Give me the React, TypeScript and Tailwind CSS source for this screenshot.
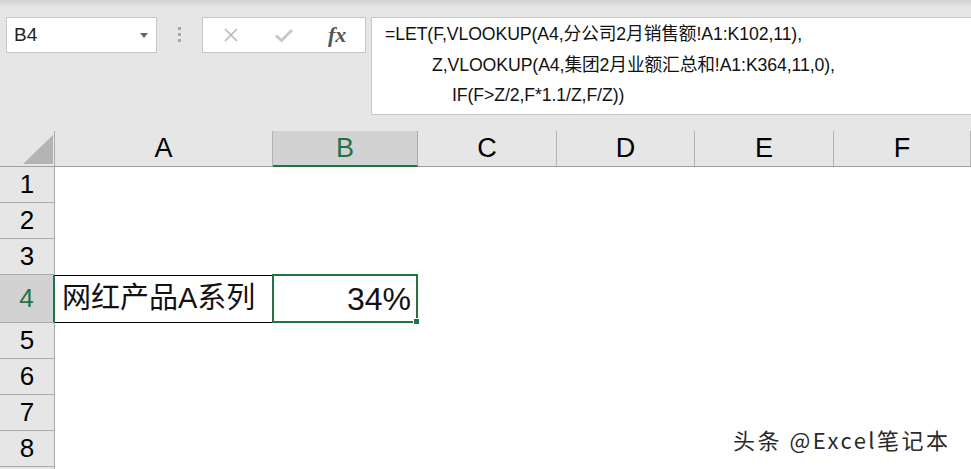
import React from "react";

const cols = [
  { name: "A", w: "w-[218px]" },
  { name: "B", w: "w-[145px]" },
  { name: "C", w: "w-[139px]" },
  { name: "D", w: "w-[138px]" },
  { name: "E", w: "w-[139px]" },
  { name: "F", w: "flex-1" },
];

const rows = [
  { n: 1, h: "h-[36px]" },
  { n: 2, h: "h-[36px]" },
  { n: 3, h: "h-[36px]" },
  { n: 4, h: "h-[48px]" },
  { n: 5, h: "h-[36px]" },
  { n: 6, h: "h-[36px]" },
  { n: 7, h: "h-[36px]" },
  { n: 8, h: "h-[36px]" },
  { n: 9, h: "h-[36px]" },
];

const font = "font-['Liberation_Sans','Noto_Sans_CJK_SC',sans-serif]";

export default function App() {
  return (
    <div className={`relative w-[971px] h-[469px] overflow-hidden bg-white ${font}`}>
      {/* Formula bar area */}
      <div className="h-[131px] bg-[linear-gradient(to_bottom,#d2d2d2_0px,#e6e6e6_7px)] flex items-start pt-[17px]">
        {/* Name box */}
        <div className="ml-[6px] w-[151px] h-[36px] bg-white border border-[#c6c6c6] flex items-center justify-between pl-[7px] pr-[8px]">
          <span className="text-[19px] text-[#222]">B4</span>
          <svg width="8" height="5" viewBox="0 0 8 5"><path d="M0 0h8L4 5z" fill="#666" /></svg>
        </div>
        {/* dots */}
        <div className="ml-[21px] mt-[10px] flex flex-col gap-[3px]">
          <div className="w-[3px] h-[3px] bg-[#a8a8a8]" />
          <div className="w-[3px] h-[3px] bg-[#a8a8a8]" />
          <div className="w-[3px] h-[3px] bg-[#a8a8a8]" />
        </div>
        {/* buttons */}
        <div className="ml-[21px] w-[164px] h-[36px] bg-white border border-[#c6c6c6] flex items-center">
          <svg className="ml-[20px]" width="16" height="16" viewBox="0 0 16 16">
            <path d="M2 2L14 14M14 2L2 14" stroke="#b9b9b9" strokeWidth="1.6" />
          </svg>
          <svg className="ml-[35px]" width="20" height="16" viewBox="0 0 20 16">
            <path d="M2 8.5L7.5 13.5L18 3" stroke="#c8c8c8" strokeWidth="3" fill="none" />
          </svg>
          <span className="ml-[34px] font-['Liberation_Serif',serif] italic font-bold text-[22px] text-[#555] leading-none">
            fx
          </span>
        </div>
        {/* formula */}
        <div className="ml-[5px] flex-1 h-[98px] bg-white border border-[#c6c6c6] border-r-0 pt-[1px] pl-[13px] text-[17.7px] leading-[30.5px] text-[#111] tracking-[-0.1px]">
          <div>=LET(F,VLOOKUP(A4,分公司2月销售额!A1:K102,11),</div>
          <div className="pl-[47px]">Z,VLOOKUP(A4,集团2月业额汇总和!A1:K364,11,0),</div>
          <div className="pl-[67px]">IF(F&gt;Z/2,F*1.1/Z,F/Z))</div>
        </div>
      </div>

      {/* Column header row */}
      <div className="flex h-[36px] bg-[#e6e6e6] border-b border-[#9e9e9e]">
        <div className="w-[55px] border-r border-[#ababab] relative">
          <svg className="absolute left-[23px] top-[4px]" width="30" height="29" viewBox="0 0 30 29">
            <path d="M30 0V29H0z" fill="#b4b4b4" />
          </svg>
        </div>
        {cols.map((c) =>
          c.name === "B" ? (
            <div
              key={c.name}
              className={`${c.w} bg-[#d2d2d2] border-r border-[#ababab] border-b-2 border-b-[#217346] -mb-[1px] flex items-center justify-center text-[27px] text-[#217346]`}
            >
              {c.name}
            </div>
          ) : (
            <div
              key={c.name}
              className={`${c.w} border-r border-[#b4b4b4] flex items-center justify-center text-[27px] text-black`}
            >
              {c.name}
            </div>
          )
        )}
      </div>

      {/* Rows */}
      {rows.map((r) => {
        const sel = r.n === 4;
        return (
          <div key={r.n} className={`flex ${r.h}`}>
            <div
              className={`w-[55px] shrink-0 flex items-center justify-center text-[26px] border-b ${
                sel
                  ? "bg-[#d2d2d2] text-[#217346] border-r-2 border-r-[#217346] border-b-[#ababab]"
                  : "bg-[#e6e6e6] text-black border-r border-r-[#ababab] border-b-[#ababab]"
              }`}
            >
              {r.n < 9 ? r.n : ""}
            </div>
            {sel ? (
              <>
                <div className="w-[217px] border-t border-b border-black flex items-center pl-[7px] text-[29px] text-[#111]">
                  网红产品A系列
                </div>
                <div className="relative w-[146px] -mt-[1px] border-2 border-[#217346] flex items-center justify-end pr-[5px] text-[32px] text-[#111]">
                  34%
                  <div className="absolute -right-[4px] -bottom-[4px] w-[7px] h-[7px] bg-[#217346] border border-white" />
                </div>
                <div className="flex-1" />
              </>
            ) : (
              <div className="flex-1" />
            )}
          </div>
        );
      })}

      {/* Watermark */}
      <div className="absolute left-[733px] top-[428px] text-[22px] tracking-[2.5px] text-[#2a2a2a] [text-shadow:0_0_2px_#fff,0_0_2px_#fff] font-['Noto_Sans_CJK_SC','Liberation_Sans',sans-serif] leading-none">
        头条 @Excel笔记本
      </div>
    </div>
  );
}
